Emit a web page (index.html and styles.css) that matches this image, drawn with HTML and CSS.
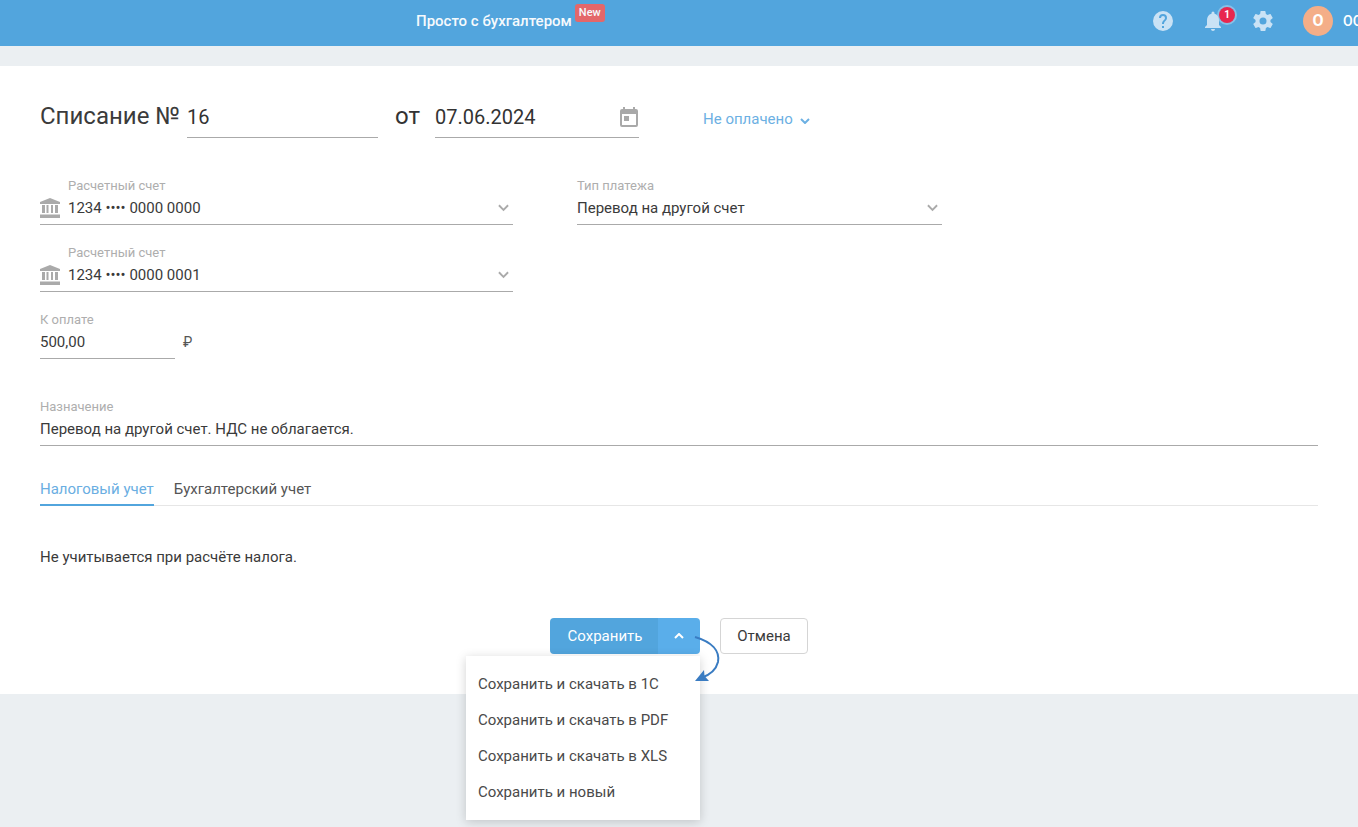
FILE: index.html
```html
<!DOCTYPE html>
<html lang="ru">
<head>
<meta charset="utf-8">
<title>Списание</title>
<link rel="stylesheet" href="styles.css">
</head>
<body>
<header class="topbar">
  <div class="brand">Просто с бухгалтером<span class="new">New</span></div>
  <div class="tools">
    <svg class="ico help" viewBox="0 0 24 24"><path fill="#c9e2f5" d="M12 2a10 10 0 1 0 0 20 10 10 0 0 0 0-20zm1 17h-2v-2h2v2zm2.07-7.75-.9.92C13.45 12.9 13 13.5 13 15h-2v-.5c0-1.1.45-2.1 1.17-2.83l1.24-1.26c.37-.36.59-.86.59-1.41a2 2 0 0 0-4 0H8a4 4 0 0 1 8 0c0 .88-.36 1.68-.93 2.25z"/></svg>
    <div class="bell">
      <svg class="ico" viewBox="0 0 24 24"><path fill="#c9e2f5" d="M12 22c1.1 0 2-.9 2-2h-4c0 1.1.9 2 2 2zm6-6v-5c0-3.07-1.63-5.64-4.5-6.32V4a1.5 1.5 0 0 0-3 0v.68C7.64 5.36 6 7.92 6 11v5l-2 2v1h16v-1l-2-2z"/></svg>
      <span class="badge">1</span>
    </div>
    <svg class="ico gear" viewBox="0 0 24 24"><path fill="#c9e2f5" d="M19.43 12.98c.04-.32.07-.64.07-.98s-.03-.66-.07-.98l2.11-1.65c.19-.15.24-.42.12-.64l-2-3.46c-.12-.22-.39-.3-.61-.22l-2.49 1c-.52-.4-1.08-.73-1.69-.98l-.38-2.65A.49.49 0 0 0 14 2h-4c-.25 0-.46.18-.49.42l-.38 2.65c-.61.25-1.17.59-1.69.98l-2.49-1c-.23-.09-.49 0-.61.22l-2 3.46c-.13.22-.07.49.12.64l2.11 1.65c-.04.32-.07.65-.07.98s.03.66.07.98l-2.11 1.65c-.19.15-.24.42-.12.64l2 3.46c.12.22.39.3.61.22l2.49-1c.52.4 1.08.73 1.69.98l.38 2.65c.03.24.24.42.49.42h4c.25 0 .46-.18.49-.42l.38-2.65c.61-.25 1.17-.59 1.69-.98l2.49 1c.23.09.49 0 .61-.22l2-3.46c.12-.22.07-.49-.12-.64l-2.11-1.65zM12 15.5a3.5 3.5 0 1 1 0-7 3.5 3.5 0 0 1 0 7z"/></svg>
    <div class="avatar">О</div>
    <div class="org">ООО</div>
  </div>
</header>

<main class="card">
  <div class="title-row">
    <h1 class="title">Списание №</h1>
    <div class="big-input num">16</div>
    <span class="from">от</span>
    <div class="big-input date">07.06.2024
      <svg class="cal" viewBox="0 0 24 24"><path fill="#a9a9a9" d="M19 3h-1V1h-2v2H8V1H6v2H5a2 2 0 0 0-2 2v14a2 2 0 0 0 2 2h14a2 2 0 0 0 2-2V5a2 2 0 0 0-2-2zm0 16H5V8h14v11zM7 10h5v5H7z"/></svg>
    </div>
    <div class="status">Не оплачено
      <svg class="chev-s" viewBox="0 0 10 6"><path d="M1 1l4 4 4-4" fill="none" stroke="#6cb0e3" stroke-width="2"/></svg>
    </div>
  </div>

  <div class="form-row first">
    <div class="field account">
      <svg class="bank" viewBox="0 0 20 20"><path fill="#aaa" d="M10 0 0 4v2h20V4zM2 7h3v8H2zM6.500 7h2v8h-2zM11 7h2v8h-2zM15 7h3v8h-3zM0 16.500h20V20H0z"/></svg>
      <div class="field-body">
        <label class="lbl">Расчетный счет</label>
        <div class="val">1234 •••• 0000 0000<svg class="chev" viewBox="0 0 12 8"><path d="M1 1l5 5 5-5" fill="none" stroke="#aaa" stroke-width="2"/></svg></div>
      </div>
    </div>
    <div class="field paytype">
      <div class="field-body">
        <label class="lbl">Тип платежа</label>
        <div class="val">Перевод на другой счет<svg class="chev" viewBox="0 0 12 8"><path d="M1 1l5 5 5-5" fill="none" stroke="#aaa" stroke-width="2"/></svg></div>
      </div>
    </div>
  </div>

  <div class="form-row next">
    <div class="field account">
      <svg class="bank" viewBox="0 0 20 20"><path fill="#aaa" d="M10 0 0 4v2h20V4zM2 7h3v8H2zM6.500 7h2v8h-2zM11 7h2v8h-2zM15 7h3v8h-3zM0 16.500h20V20H0z"/></svg>
      <div class="field-body">
        <label class="lbl">Расчетный счет</label>
        <div class="val">1234 •••• 0000 0001<svg class="chev" viewBox="0 0 12 8"><path d="M1 1l5 5 5-5" fill="none" stroke="#aaa" stroke-width="2"/></svg></div>
      </div>
    </div>
  </div>

  <div class="form-row next">
    <div class="field amount">
      <div class="field-body">
        <label class="lbl">К оплате</label>
        <div class="val">500,00</div>
      </div>
    </div>
    <span class="rub">₽</span>
  </div>

  <div class="form-row purpose">
    <div class="field wide">
      <div class="field-body">
        <label class="lbl">Назначение</label>
        <div class="val">Перевод на другой счет. НДС не облагается.</div>
      </div>
    </div>
  </div>

  <nav class="tabs">
    <a class="tab active">Налоговый учет</a>
    <a class="tab">Бухгалтерский учет</a>
  </nav>

  <p class="note">Не учитывается при расчёте налога.</p>

  <div class="actions">
    <div class="split">
      <button class="btn-main">Сохранить</button>
      <button class="btn-arrow"><svg viewBox="0 0 10 6"><path d="M1 5l4-4 4 4" fill="none" stroke="#fff" stroke-width="2"/></svg></button>
      <ul class="menu">
        <li>Сохранить и скачать в 1С</li>
        <li>Сохранить и скачать в PDF</li>
        <li>Сохранить и скачать в XLS</li>
        <li>Сохранить и новый</li>
      </ul>
      <svg class="callout" viewBox="0 0 30 50"><path d="M3 2C20 7 28 16 26 27 24 35 18 40 9 43" fill="none" stroke="#3a7cc2" stroke-width="2"/><path d="M3 46 12 35 12.500 41 17 46z" fill="#3a7cc2"/></svg>
    </div>
    <button class="btn-cancel">Отмена</button>
  </div>
</main>
</body>
</html>
```

FILE: styles.css
```css
* { box-sizing: border-box; }
html, body { margin: 0; height: 100%; }
body {
  background: #ebeff2;
  font-family: Roboto, "Liberation Sans", sans-serif;
  color: #333;
  overflow: hidden;
}
.topbar {
  height: 46px;
  background: #52a5dd;
  display: flex;
  align-items: flex-start;
  justify-content: space-between;
  padding-left: 416px;
  overflow: hidden;
  margin-bottom: 20px;
}
.brand {
  display: flex;
  align-items: flex-start;
  color: #fff;
  font-size: 15px;
  font-weight: 500;
  line-height: 16px;
  padding-top: 13px;
  opacity: .95;
}
.new {
  margin: -9px 0 0 3px;
  height: 18px;
  padding: 0 4px;
  background: #ec6464;
  border-radius: 3px;
  font-size: 11px;
  line-height: 17px;
}
.tools {
  display: flex;
  align-items: center;
  height: 42px;
  width: 206px;
  flex: none;
  color: #fff;
}
.ico { width: 24px; height: 24px; flex: none; display: block; }
.help { margin-left: -1px; }
.bell { position: relative; width: 24px; height: 24px; margin-left: 26px; }
.badge {
  position: absolute;
  left: 18px;
  top: -2px;
  width: 16px;
  height: 16px;
  border-radius: 50%;
  background: #e8274f;
  box-shadow: 0 0 0 2px rgba(200, 226, 245, .45);
  color: #fff;
  font-size: 10px;
  font-weight: 700;
  line-height: 16px;
  text-align: center;
}
.gear { margin-left: 26px; }
.avatar {
  margin-left: 28px;
  width: 30px;
  height: 30px;
  flex: none;
  border-radius: 50%;
  background: #f4ae88;
  font-size: 16px;
  font-weight: 700;
  line-height: 30px;
  text-align: center;
}
.org { margin-left: 10px; font-size: 14px; font-weight: 500; white-space: nowrap; }

.card {
  height: 628px;
  background: #fff;
  padding: 30px 40px 0;
}
.title-row { display: flex; align-items: flex-start; height: 42px; }
.title { margin: 0; font-size: 24px; font-weight: 400; line-height: 40px; color: #3b3b3b; width: 147px; }
.big-input {
  position: relative;
  height: 42px;
  border-bottom: 1px solid #aaa;
  font-size: 20px;
  line-height: 42px;
}
.num { width: 191px; }
.from { width: 57px; padding-left: 17px; font-size: 24px; line-height: 40px; flex: none; }
.date { width: 204px; }
.cal { position: absolute; right: -2px; top: 10px; width: 24px; height: 24px; }
.status { margin-left: 64px; padding-top: 14px; font-size: 15px; line-height: 18px; color: #6cb0e3; display: flex; }
.chev-s { width: 10px; height: 6px; margin: 8px 0 0 7px; }

.form-row { display: flex; }
.first { margin-top: 40px; }
.next { margin-top: 20px; }
.purpose { margin-top: 40px; }
.field { display: flex; align-items: flex-end; }
.account { width: 473px; }
.paytype { width: 365px; margin-left: 64px; }
.amount { width: 135px; }
.wide { width: 100%; }
.field-body { flex: 1; border-bottom: 1px solid #aaa; height: 47px; padding-top: 1px; }
.account { border-bottom: 1px solid #aaa; }
.account .field-body { border-bottom: 0; height: 46px; }
.bank { width: 20px; height: 20px; flex: none; margin: 0 8px 6px 0; }
.lbl { display: block; font-size: 13px; line-height: 14px; color: #aeaeae; }
.val {
  display: flex;
  justify-content: space-between;
  align-items: center;
  margin-top: 6px;
  font-size: 15px;
  line-height: 18px;
  color: #3a3a3a;
}
.chev { width: 11px; height: 8px; margin-right: 4px; }
.rub { margin: 21px 0 0 8px; font-size: 14px; line-height: 18px; color: #555; }

.tabs { display: flex; gap: 20px; margin-top: 27px; height: 33px; border-bottom: 1px solid #e6e6e6; }
.tab { font-size: 15px; line-height: 33px; height: 33px; color: #555; }
.tab.active { color: #6aaee2; border-bottom: 2px solid #52a5dd; }
.note { margin: 42px 0 0; font-size: 15px; line-height: 18px; color: #3a3a3a; }

.actions { display: flex; justify-content: center; gap: 20px; margin-top: 52px; }
.split { position: relative; display: flex; }
button { font-family: inherit; cursor: pointer; }
.btn-main, .btn-arrow {
  height: 36px;
  border: 0;
  color: #fff;
  font-size: 15px;
  padding: 0;
}
.btn-main { width: 108px; padding-left: 2px; background: #52a5dd; border-radius: 4px 0 0 4px; }
.btn-arrow { width: 42px; background: #5aaeea; border-radius: 0 4px 4px 0; display: flex; align-items: center; justify-content: center; }
.btn-arrow svg { width: 10px; height: 6px; }
.btn-cancel {
  width: 88px;
  height: 36px;
  background: #fff;
  border: 1px solid #d5d5d5;
  border-radius: 4px;
  color: #3a3a3a;
  font-size: 15px;
  padding: 0;
}
.menu {
  position: absolute;
  right: 0;
  top: 38px;
  width: 234px;
  margin: 0;
  padding: 10px 0;
  list-style: none;
  background: #fff;
  box-shadow: 0 2px 10px rgba(0, 0, 0, .18);
}
.menu li { padding-left: 12px; font-size: 15px; line-height: 36px; color: #4a4a4a; white-space: nowrap; }
.callout { position: absolute; left: 142px; top: 17px; width: 30px; height: 50px; }
```
